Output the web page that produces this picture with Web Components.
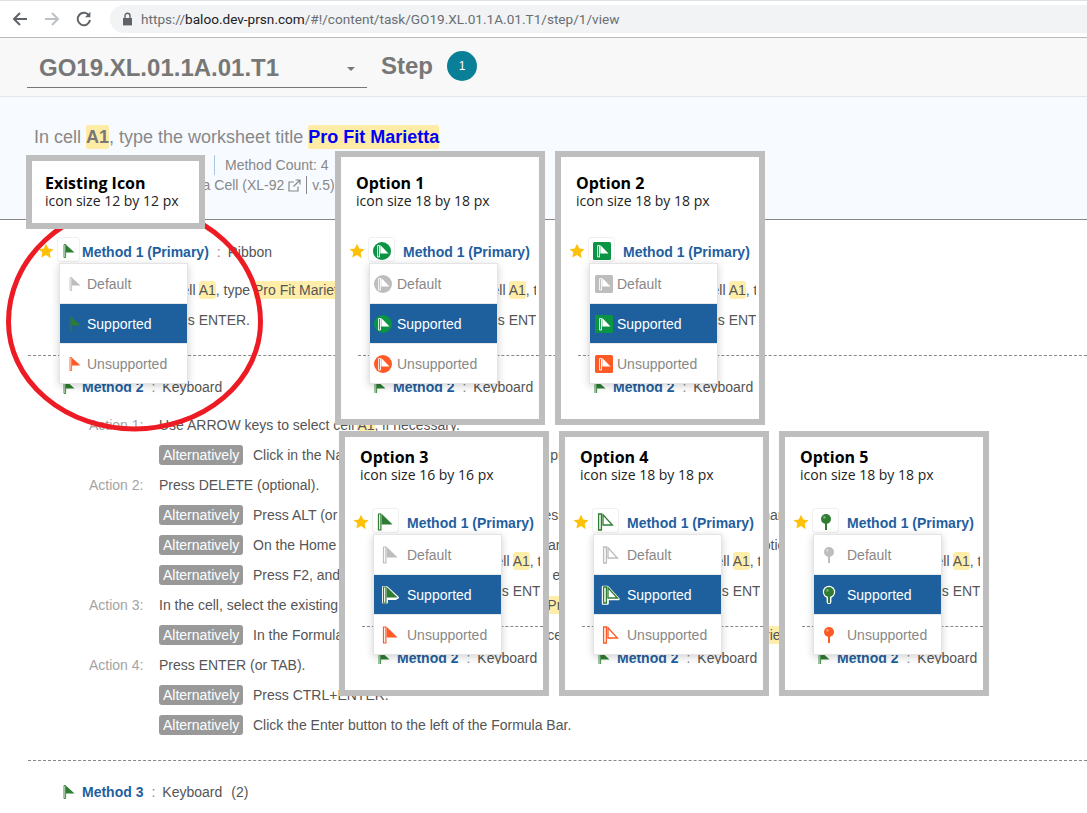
<!DOCTYPE html>
<html>
<head>
<meta charset="utf-8">
<title>Method icon options</title>
<style>
    html, body { margin: 0; padding: 0; height: 813px; overflow: hidden; background: #fff; }
    body { position: relative; font-family: "Liberation Sans", Arial, sans-serif; font-size: 14px; color: #555; }
</style>
</head>
<body>
<browser-bar url="https://baloo.dev-prsn.com/#!/content/task/GO19.XL.01.1A.01.T1/step/1/view"></browser-bar>
<step-header task="GO19.XL.01.1A.01.T1" step="1"></step-header>
<task-summary></task-summary>

<method-row boxed star label="Method 1 (Primary)" via="Ribbon">
    <method-icon slot="icon" kind="mini" tone="ok"></method-icon>
    <icon-menu slot="menu" kind="mini"></icon-menu>
</method-row>
<action-line first>In cell <hl-text>A1</hl-text>, type <hl-text>Pro Fit Marietta</hl-text></action-line>
<action-line>Press ENTER.</action-line>
<dash-line></dash-line>

<method-row label="Method 2" via="Keyboard">
    <method-icon slot="icon" kind="mini" tone="ok"></method-icon>
</method-row>
<action-line first label="Action 1:">Use ARROW keys to select cell <hl-text>A1</hl-text>, if necessary.</action-line>
<action-line alt>Click in the Name Box, type the address of cell, press ENTER.</action-line>
<action-line label="Action 2:">Press DELETE (optional).</action-line>
<action-line alt>Press ALT (or COMMAND on a Mac) and so press keys on the keyboard to pick a name</action-line>
<action-line alt>On the Home tab, in the Editing group, click Clear arrow, and then select the Full option</action-line>
<action-line alt>Press F2, and then use the arrow keys, edit this end.</action-line>
<action-line label="Action 3:">In the cell, select the existing text, and then replace it by using <hl-text>Pro Fit Marietta</hl-text></action-line>
<action-line alt>In the Formula Bar, select the text, and so replace it with the worksheet: <hl-text>Pro Fit Marietta</hl-text></action-line>
<action-line label="Action 4:">Press ENTER (or TAB).</action-line>
<action-line alt>Press CTRL+ENTER.</action-line>
<action-line alt>Click the Enter button to the left of the Formula Bar.</action-line>
<dash-line></dash-line>

<method-row label="Method 3" via="Keyboard" count="(2)">
    <method-icon slot="icon" kind="mini" tone="ok"></method-icon>
</method-row>

<ring-mark></ring-mark>

<option-panel kind="mini" layout="short" style="left:26px;top:155px;width:179px;height:74px">
    <span slot="title">Existing Icon</span>icon size 12 by 12 px
</option-panel>
<option-panel kind="circle" layout="tall" style="left:335px;top:151px;width:210px;height:274px">
    <span slot="title">Option 1</span>icon size 18 by 18 px
</option-panel>
<option-panel kind="square" layout="tall" style="left:555px;top:151px;width:210px;height:274px">
    <span slot="title">Option 2</span>icon size 18 by 18 px
</option-panel>
<option-panel kind="flag" layout="low" style="left:339px;top:431px;width:210px;height:265px">
    <span slot="title">Option 3</span>icon size 16 by 16 px
</option-panel>
<option-panel kind="outline" layout="low" style="left:559px;top:431px;width:210px;height:265px">
    <span slot="title">Option 4</span>icon size 18 by 18 px
</option-panel>
<option-panel kind="pin" layout="low" style="left:779px;top:431px;width:210px;height:265px">
    <span slot="title">Option 5</span>icon size 18 by 18 px
</option-panel>

<script>
const TONES = { idle: '#bdbdbd', ok: '#2e7d32', bad: '#ff5a26' };
const FILLED = { idle: '#bdbdbd', ok: '#0b9444', bad: '#ff5a26' };

// one place for all the flag and pin drawings
function iconSvg(kind, tone, halo) {
    const c = TONES[tone];
    const f = FILLED[tone];
    if (kind === 'mini') {
        return `<svg width="12" height="14" viewBox="0 0 12 14">
            <path d="M1 .5h1.600v13H1z" fill="none" stroke="${c}" stroke-width=".9"/>
            <path d="M3 .8 11.500 8.400H3z" fill="${c}"/></svg>`;
    }
    if (kind === 'circle' || kind === 'square') {
        const back = kind === 'circle'
            ? `<circle cx="9" cy="9" r="9" fill="${f}"/>`
            : `<rect width="18" height="18" rx="1.500" fill="${f}"/>`;
        return `<svg width="18" height="18" viewBox="0 0 18 18">${back}
            <path d="M4.600 3.500h1.900v11.500H4.600z" fill="none" stroke="#fff" stroke-width=".9"/>
            <path d="M7.300 3 15.500 11.500H7.300z" fill="#fff"/></svg>`;
    }
    if (kind === 'flag') {
        const under = halo ? `<path d="M1 1h3.600L16 11.600 13.600 13H5v3.500H1z" fill="#fff" stroke="#fff" stroke-width="2" stroke-linejoin="round"/>` : '';
        return `<svg width="18" height="18" viewBox="0 0 18 18" style="overflow:visible">${under}
            <path d="M1.500 1h2.400v16H1.500z" fill="#fff" stroke="${c}" stroke-width="1.200"/>
            <path d="M4.600 .8 15.600 11.500H4.600z" fill="${c}"/></svg>`;
    }
    if (kind === 'outline') {
        const under = halo ? `<path d="M1 1h4.600L16.500 13H5.600v4.500H1z" fill="#fff" stroke="#fff" stroke-width="2.400" stroke-linejoin="round"/>` : '';
        return `<svg width="18" height="18" viewBox="0 0 18 18" style="overflow:visible">${under}
            <path d="M1.600 1h2.800v16H1.600z" fill="${halo ? '#fff' : 'none'}" stroke="${c}" stroke-width="1.300"/>
            <path d="M6 1.800 15.400 12H6z" fill="${halo ? '#fff' : 'none'}" stroke="${c}" stroke-width="1.300"/></svg>`;
    }
    // pin
    const under = halo ? `<circle cx="9" cy="6" r="6.200" fill="#fff"/><rect x="6.600" y="8" width="4.800" height="10" rx="2" fill="#fff"/>` : '';
    return `<svg width="18" height="18" viewBox="0 0 18 18" style="overflow:visible">${under}
        <rect x="8" y="9" width="2" height="8" fill="${c}"/>
        <circle cx="9" cy="6" r="5" fill="${c}"/>
        <circle cx="7.400" cy="4.400" r="1.300" fill="#fff" opacity=".35"/></svg>`;
}

class BrowserBar extends HTMLElement {
    connectedCallback() {
        const url = this.getAttribute('url');
        const m = url.match(/^(https:\/\/)([^/]+)(.*)$/);
        this.attachShadow({ mode: 'open' });
        this.shadowRoot.innerHTML = `
            <style>
                :host { display: flex; align-items: center; height: 37px; box-sizing: border-box; background: #fff;
                    border-top: 1px solid #dee1e6; padding: 4px 0 5px 11px; }
                .nav { width: 18px; height: 18px; margin-right: 14px; flex: none; }
                .pill { flex: 1; height: 28px; margin-left: 3px; background: #f1f3f4; border-radius: 14px 0 0 14px;
                    display: flex; align-items: center; padding-left: 12px; color: #6a6e73;
                    font: 13.6px Roboto, "Liberation Sans", sans-serif; white-space: nowrap; }
                .pill svg { margin-right: 8px; }
                b { font-weight: 400; color: #202124; }
            </style>
            <svg class="nav" viewBox="0 0 18 18" fill="none" stroke="#5f6368" stroke-width="2"><path d="M16 9H3M9 3 3 9l6 6"/></svg>
            <svg class="nav" viewBox="0 0 18 18" fill="none" stroke="#bdc1c6" stroke-width="2"><path d="M2 9h13M9 3l6 6-6 6"/></svg>
            <svg class="nav" viewBox="0 0 18 18" fill="none" stroke="#5f6368" stroke-width="2"><path d="M14.300 6A6.200 6.200 0 1 0 15 10"/><path d="M15.400 1.800v5.400h-5.400" fill="#5f6368" stroke="none"/></svg>
            <div class="pill">
                <svg width="11" height="14" viewBox="0 0 11 14"><path d="M1 6h9v7.400H1z" fill="#5f6368"/><path d="M3 6V3.800a2.500 2.500 0 0 1 5 0V6" fill="none" stroke="#5f6368" stroke-width="1.400"/></svg>
                <span>${m[1]}<b>${m[2]}</b>${m[3]}</span>
            </div>`;
    }
}
customElements.define('browser-bar', BrowserBar);

class StepHeader extends HTMLElement {
    connectedCallback() {
        this.attachShadow({ mode: 'open' });
        this.shadowRoot.innerHTML = `
            <style>
                :host { display: flex; height: 60px; box-sizing: border-box; background: #f8f8f8;
                    border-top: 1px solid #b9b9b9; border-bottom: 1px solid #e6e6e6; padding-left: 27px; color: #777; font-weight: 700; }
                .pick { width: 340px; height: 50px; box-sizing: border-box; border-bottom: 1px solid #777; padding: 16px 12px 0;
                    display: flex; justify-content: space-between; font-size: 24px; line-height: 28px; }
                .caret { margin-top: 13px; width: 0; height: 0; border: 4px solid transparent; border-top-color: #777; border-bottom: 0; }
                .step { margin-left: 14px; font-size: 24px; line-height: 28px; padding-top: 14px; }
                .num { margin: 13px 0 0 14px; width: 30px; height: 30px; border-radius: 50%; background: #0a8098; color: #fff;
                    font-size: 12px; font-weight: 400; line-height: 30px; text-align: center; }
            </style>
            <div class="pick"><span>${this.getAttribute('task')}</span><span class="caret"></span></div>
            <div class="step">Step</div>
            <div class="num">${this.getAttribute('step')}</div>`;
    }
}
customElements.define('step-header', StepHeader);

class TaskSummary extends HTMLElement {
    connectedCallback() {
        this.attachShadow({ mode: 'open' });
        this.shadowRoot.innerHTML = `
            <style>
                :host { display: block; height: 123px; box-sizing: border-box; background: #f7faff; border-bottom: 1px solid #888;
                    padding: 28px 0 0 34px; color: #888; margin-bottom: 17px; }
                .title { font-size: 18px; line-height: 24px; white-space: nowrap; }
                .title span { background: #feeca6; border-radius: 2px; font-weight: 700; padding: 2px 0; }
                .a1 { color: #777; }
                .pro { color: #0000f5; }
                .meta { font-size: 14px; line-height: 20px; white-space: nowrap; display: flex; align-items: center; }
                .one { margin: 6px 0 0 180px; }
                .one i { width: 1px; height: 20px; background: #a9c6e3; margin-right: 10px; }
                .two { margin-left: 83px; }
                .two svg { margin: 0 5px 0 4px; }
                .two i { width: 1px; height: 18px; background: #888; margin-right: 5px; }
            </style>
            <div class="title">In cell <span class="a1">A1</span>, type the worksheet title <span class="pro">Pro Fit Marietta</span></div>
            <div class="meta one"><i></i>Method Count: 4</div>
            <div class="meta two">Enter Data in a Cell (XL-92
                <svg width="13" height="13" viewBox="0 0 13 13" fill="none" stroke="#888" stroke-width="1.200"><path d="M10 7.500V12H1V3h5M7.500 1H12v4.500M12 1 5.500 7.500"/></svg><i></i>v.5)</div>`;
    }
}
customElements.define('task-summary', TaskSummary);

class HlText extends HTMLElement {
    connectedCallback() {
        this.attachShadow({ mode: 'open' });
        this.shadowRoot.innerHTML = `
            <style>:host { background: #feeeaa; border-radius: 3px; padding: 1px 0; }</style><slot></slot>`;
    }
}
customElements.define('hl-text', HlText);

class MethodIcon extends HTMLElement {
    connectedCallback() {
        const kind = this.getAttribute('kind');
        const tone = this.getAttribute('tone');
        this.attachShadow({ mode: 'open' });
        this.shadowRoot.innerHTML = `
            <style>:host { display: inline-flex; } svg { display: block; }</style>
            ${iconSvg(kind, tone, this.hasAttribute('halo'))}`;
    }
}
customElements.define('method-icon', MethodIcon);

class IconMenu extends HTMLElement {
    connectedCallback() {
        const kind = this.getAttribute('kind');
        const rows = [['idle', 'Default'], ['ok', 'Supported'], ['bad', 'Unsupported']];
        this.attachShadow({ mode: 'open' });
        this.shadowRoot.innerHTML = `
            <style>
                :host { display: block; width: 127px; box-sizing: content-box; background: #e8e8e8; border: 1px solid #e4e4e4;
                    margin-left: -1px; box-shadow: 0 2px 8px rgba(0, 0, 0, .18); }
                .item { height: 39px; background: #fff; color: #888; display: flex; align-items: center;
                    font-size: 14px; margin-bottom: 1px; }
                .item:last-child { margin-bottom: 0; }
                .item.on { background: #1e5f9e; color: #fff; }
                .slot { width: var(--text-x, 27px); box-sizing: border-box; padding-left: var(--icon-x, 9px); flex: none; display: flex; }
            </style>
            ${rows.map(([tone, label]) => `
                <div class="item ${tone === 'ok' ? 'on' : ''}">
                    <span class="slot"><method-icon kind="${kind}" tone="${tone}" ${tone === 'ok' ? 'halo' : ''}></method-icon></span>
                    <span>${label}</span>
                </div>`).join('')}`;
    }
}
customElements.define('icon-menu', IconMenu);

class MethodRow extends HTMLElement {
    connectedCallback() {
        const via = this.getAttribute('via');
        const count = this.getAttribute('count');
        const star = this.hasAttribute('star');
        this.attachShadow({ mode: 'open' });
        this.shadowRoot.innerHTML = `
            <style>
                :host { display: flex; position: relative; height: 30px; padding-left: var(--row-pad, 39px); white-space: nowrap;
                    line-height: 30px; font-size: 14px; color: #555; }
                .star { width: 18px; flex: none; padding-top: 6px; box-sizing: border-box; }
                .star svg { display: block; margin-left: -1px; }
                .box { width: 25px; height: 30px; flex: none; display: flex; align-items: center; padding-left: 6px; box-sizing: border-box; }
                :host([boxed]) .box { width: var(--box-w, 23px); height: 25px; margin-right: var(--box-gap, 2px); justify-content: center;
                    padding: 2px 0 0; border: 1px solid #f0f0f0; border-radius: 3px; }
                .name { color: #1f5f9f; font-weight: 700; }
                .sep { color: #888; margin: 0 7px 0 8px; }
                .count { margin-left: 9px; }
                .drop { position: absolute; left: var(--menu-x, 60px); top: 26px; z-index: 2; }
            </style>
            <div class="star">${star ? `<svg width="16" height="16" viewBox="0 0 24 24"><path fill="#ffc107" d="M12 1l3.400 7.300 7.900 1-5.800 5.500 1.500 7.900L12 18l-7 3.700 1.500-7.900L.7 9.300l7.900-1z"/></svg>` : ''}</div>
            <div class="box"><slot name="icon"></slot></div>
            <span class="name">${this.getAttribute('label')}</span>
            ${via ? `<span class="sep">:</span><span>${via}</span>` : ''}
            ${count ? `<span class="count">${count}</span>` : ''}
            <div class="drop"><slot name="menu"></slot></div>`;
    }
}
customElements.define('method-row', MethodRow);

class ActionLine extends HTMLElement {
    connectedCallback() {
        const label = this.getAttribute('label') || '';
        const alt = this.hasAttribute('alt');
        this.attachShadow({ mode: 'open' });
        this.shadowRoot.innerHTML = `
            <style>
                :host { display: flex; align-items: center; height: 30px; padding-left: var(--action-pad, 89px); white-space: nowrap;
                    font-size: 14px; color: #555; }
                :host([first]) { margin-top: 8px; }
                .label { width: 70px; flex: none; color: #a3a3a3; }
                .badge { background: #999; color: #fff; height: 20px; line-height: 20px; width: 84px; box-sizing: border-box; padding-left: 4px;
                    border-radius: 3px; margin-right: 10px; flex: none; }
            </style>
            <span class="label">${label}</span>
            ${alt ? '<span class="badge">Alternatively</span>' : ''}
            <span><slot></slot></span>`;
    }
}
customElements.define('action-line', ActionLine);

class DashLine extends HTMLElement {
    connectedCallback() {
        this.attachShadow({ mode: 'open' });
        this.shadowRoot.innerHTML = `
            <style>
                :host { display: block; height: 0; border-top: 1px dashed #888; margin: 20px 0 16px var(--dash-left, 28px); }
            </style>`;
    }
}
customElements.define('dash-line', DashLine);

// big hand drawn red ring round the existing icon, on top of the page text
class RingMark extends HTMLElement {
    connectedCallback() {
        this.attachShadow({ mode: 'open' });
        this.shadowRoot.innerHTML = `
            <style>:host { position: absolute; left: 0; top: 0; pointer-events: none; } svg { display: block; }</style>
            <svg width="280" height="450" fill="none"><path d="M8.500 322A126 116 0 0 1 260.500 322 126 107 0 0 1 8.500 322Z" stroke="#ed1c24" stroke-width="5"/></svg>`;
    }
}
customElements.define('ring-mark', RingMark);

class OptionPanel extends HTMLElement {
    connectedCallback() {
        const kind = this.getAttribute('kind');
        const layout = this.getAttribute('layout');
        const snippet = layout === 'short' ? '' : `
            <div class="snip">
                <method-row boxed star label="Method 1 (Primary)">
                    <method-icon slot="icon" kind="${kind}" tone="ok"></method-icon>
                    <icon-menu slot="menu" kind="${kind}"></icon-menu>
                </method-row>
                <action-line first>In cell <hl-text>A1</hl-text>, type <hl-text>Pro Fit Marietta</hl-text></action-line>
                <action-line>Press ENTER.</action-line>
                <dash-line></dash-line>
                <method-row label="Method 2" via="Keyboard">
                    <method-icon slot="icon" kind="mini" tone="ok"></method-icon>
                </method-row>
            </div>`;
        this.attachShadow({ mode: 'open' });
        this.shadowRoot.innerHTML = `
            <style>
                :host { display: block; position: absolute; box-sizing: border-box; border: 6px solid #bebebe; background: #fff;
                    overflow: hidden; z-index: 5;
                    --row-pad: 9px; --box-w: 27px; --box-gap: 8px; --menu-x: 29px; --action-pad: 58px; --dash-left: 17px;
                    --text-x: 27px; --icon-x: 4px; }
                :host([layout=low]) { --text-x: 33px; --icon-x: 8px; --dash-left: 17px; }
                :host([kind=square]) { --icon-x: 5px; }
                :host([kind=pin]) { --icon-x: 6px; }
                .head { font-family: "Open Sans", sans-serif; font-size: 14px; line-height: 18px; color: #222;
                    padding: 17px 0 0 15px; height: 63px; white-space: nowrap; }
                :host([layout=low]) .head { padding-top: 11px; height: 60px; }
                :host([layout=short]) .head { padding: 13px 0 0 13px; height: auto; }
                ::slotted([slot=title]) { display: block; font-size: 16px; font-weight: 700; color: #000; }
                .snip { height: 156px; overflow: hidden; }
                action-line { clip-path: inset(0 3px 0 0); }
            </style>
            <div class="head"><slot name="title"></slot><slot></slot></div>
            ${snippet}`;
    }
}
customElements.define('option-panel', OptionPanel);
</script>
</body>
</html>
